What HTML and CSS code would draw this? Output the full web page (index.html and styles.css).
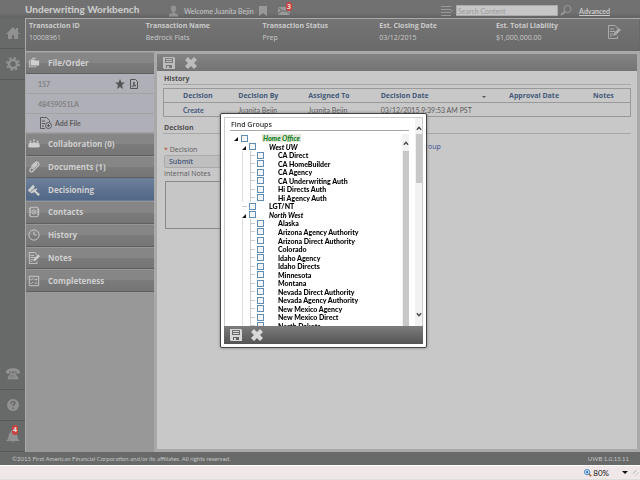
FILE: index.html
```html
<!DOCTYPE html>
<html lang="en">
<head>
  <meta charset="UTF-8">
  <meta name="viewport" content="width=device-width, initial-scale=1.0">
  <title>Underwriting Workbench</title>
  <link rel="stylesheet" href="styles.css">
</head>
<body>
  <svg class="defs" aria-hidden="true">
    <symbol id="save" viewBox="0 0 12 12"><path fill="currentColor" fill-rule="evenodd" d="M0 0h11l1 1v11H1l-1-1zM2 1v5h8V1zM3 8v3h1V9h2v2h3V8z"/><path stroke="currentColor" d="M3 2.5h6M3 4.5h6"/></symbol>
    <symbol id="close" viewBox="0 0 12 12"><path fill="currentColor" d="M3 0l3 3 3-3 3 3-3 3 3 3-3 3-3-3-3 3-3-3 3-3-3-3z"/></symbol>
    <symbol id="note" viewBox="0 0 14 14"><path fill="none" stroke="currentColor" d="M10.500 4V3L8 .5H1.500v13h9V11M3 4h4M3 6.500h5M3 9h3M3 11h2"/><path fill="currentColor" d="M12 3l2 2-5 5-3 1 1-3z"/></symbol>
  </svg>

  <div class="app">
    <header class="topbar">
      <h1>Underwriting Workbench</h1>
      <div class="user">
        <svg class="user-icon" viewBox="0 0 10 12"><path fill="currentColor" d="M5 0c2 0 3 1 3 3S7 7 6 7v1l4 2v2H0v-2l4-2V7C3 7 2 5 2 3s1-3 3-3z"/></svg>
        <span class="welcome">Welcome Juanita Bejin</span>
        <svg class="bookmark" viewBox="0 0 8 10"><path fill="currentColor" d="M0 0h8v10L4 7l-4 3z"/></svg>
        <span class="mail">
          <svg viewBox="0 0 12 8"><path fill="currentColor" d="M0 0h12L6 4zM0 1l3 2-3 4zM12 1v6L9 3zM4 4l2 1 2-1 4 4H0z"/></svg>
          <b class="badge">3</b>
        </span>
      </div>
      <form class="search">
        <svg class="lines" viewBox="0 0 12 10"><path stroke="currentColor" d="M0 .5h10M0 3.500h10M0 6.500h10M0 9.500h10"/><path fill="currentColor" d="M10 4h2l-1 2z"/></svg>
        <input type="text" placeholder="Search Content" aria-label="Search Content">
        <svg class="glass" viewBox="0 0 12 11"><g fill="none" stroke="currentColor"><circle cx="7.500" cy="4" r="3.500"/><path stroke-width="2" d="M5 6.500L1 10"/></g></svg>
        <a href="#">Advanced</a>
      </form>
    </header>

    <div class="main">
      <nav class="rail">
        <a href="#" aria-label="Home"><svg viewBox="0 0 14 14"><path fill="currentColor" d="M7 1l3 3V2h2v4l2 2h-2v5H8V9H6v4H2V8H0z"/></svg></a>
        <a href="#" aria-label="Settings"><svg viewBox="0 0 14 14"><g fill="none" stroke="currentColor"><circle cx="7" cy="7" r="4" stroke-width="2.500"/><circle cx="7" cy="7" r="6" stroke-width="2" stroke-dasharray="2.400 2.310"/></g></svg></a>
        <a href="#" class="phone" aria-label="Phone"><svg viewBox="0 0 16 14"><path fill="currentColor" d="M0 5c0-6 16-6 16 0v1l-4 1V4H4v3L0 6zM5 5h2v1h2V5h2v2l3 4v2H2v-2l3-4z"/><path stroke="#676767" d="M6 8.500h4M5 10.500h6" stroke-dasharray="1 1"/></svg></a>
        <a href="#" aria-label="Help"><svg viewBox="0 0 14 14"><circle cx="7" cy="7" r="6" fill="currentColor"/><path fill="none" stroke="#676767" stroke-width="1.500" d="M5 6c0-3 4-3 4-1 0 1-2 1.500-2 3M7 9.500V11"/></svg></a>
        <a href="#" aria-label="Alerts"><svg viewBox="0 0 14 14"><path fill="currentColor" d="M6 1h2l3 4 1 5 2 2H8l-1 2-1-2H0l2-2 1-5z"/></svg><b class="badge">4</b></a>
      </nav>

      <div class="workspace">
        <section class="summary">
          <dl>
            <div><dt>Transaction ID</dt><dd>10008961</dd></div>
            <div><dt>Transaction Name</dt><dd>Bedrock Flats</dd></div>
            <div><dt>Transaction Status</dt><dd>Prep</dd></div>
            <div><dt>Est. Closing Date</dt><dd>03/12/2015</dd></div>
            <div><dt>Est. Total Liability</dt><dd>$1,000,000.00</dd></div>
          </dl>
          <svg class="note-icon"><use href="#note"/></svg>
        </section>

        <div class="columns">
          <aside class="sidebar">
            <a class="menu-item file-order" href="#"><svg viewBox="0 0 14 14"><path fill="currentColor" d="M1 4h1v7h8v1H1zM3 3h4l1 1h5v6H3zM5 1h4v1H5z"/></svg>File/Order</a>
            <div class="files">
              <div class="file">157
                <svg class="star" viewBox="0 0 10 10"><path fill="currentColor" d="M5 0l1.500 3.500H10L7 6l1 4-3-2-3 2 1-4-3-2.500h3.500z"/></svg>
                <svg class="pdf" viewBox="0 0 8 10"><path fill="none" stroke="currentColor" d="M.5.5h5l2 2v7h-7zM4 3c0 3-1 4-2 5 1-1 3-2 4-1-1 0-2-2-2-4"/></svg>
              </div>
              <div class="file">48459051LA</div>
              <a class="file add" href="#"><svg viewBox="0 0 12 12"><g fill="none" stroke="currentColor"><path d="M5 11.500H.5V.5h6l3 3V5M2 4h3M2 6.500h3M2 9h2"/><circle cx="8.500" cy="8.500" r="3"/><path d="M8.500 7v3M7 8.500h3"/></g></svg>Add File</a>
            </div>
            <nav class="menu">
              <a class="menu-item" href="#"><svg viewBox="0 0 14 14"><path fill="currentColor" d="M1 6l2-1 2 1 2-2 2 2 2-1 2 1 1 4-2 1H2l-2-1z"/><g fill="currentColor"><circle cx="3" cy="4" r="1"/><circle cx="7" cy="2.500" r="1"/><circle cx="11" cy="4" r="1"/></g></svg>Collaboration (0)</a>
              <a class="menu-item" href="#"><svg viewBox="0 0 14 14"><path fill="none" stroke="currentColor" stroke-width="1.300" d="M5 9.500l5-5c1-1 0-2-1-1L3 9c-2 2 0 5 2 3.500l7-7c2-2 0-5-3-4L4 6"/></svg>Documents (1)</a>
              <a class="menu-item active" href="#"><svg viewBox="0 0 14 14"><path fill="currentColor" d="M0 7l6-6 2 2-1 1 2 2 1-1 1 1-2 2 5 4-2 2-5-5-1 2-1-1-1 1-2-2-1 0z"/><path stroke="#5d7391" d="M3 9l6-5"/></svg>Decisioning</a>
              <a class="menu-item" href="#"><svg viewBox="0 0 14 14"><path fill="none" stroke="currentColor" d="M2.500 1.500h9v11h-9zM12.500 3v8M1 3h2M1 5.500h2M1 8h2M1 10.500h2"/><circle cx="7" cy="7" r="2.500" fill="none" stroke="currentColor"/><circle cx="7" cy="7" r="1" fill="currentColor"/></svg>Contacts</a>
              <a class="menu-item" href="#"><svg viewBox="0 0 14 14"><g fill="none" stroke="currentColor"><circle cx="7" cy="7" r="6"/><path d="M7 3v4h3"/></g></svg>History</a>
              <a class="menu-item" href="#"><svg><use href="#note"/></svg>Notes</a>
              <a class="menu-item" href="#"><svg viewBox="0 0 14 14"><path fill="none" stroke="currentColor" d="M1.500 1.500h11v11h-11zM3 5l1 1 2-2M7.500 5.500H11M3 9l1 1 2-2M7.500 9.500H11"/></svg>Completeness</a>
            </nav>
          </aside>

          <main class="content">
            <div class="toolbar">
              <button type="button" aria-label="Save"><svg><use href="#save"/></svg></button>
              <button type="button" aria-label="Close"><svg><use href="#close"/></svg></button>
            </div>
            <div class="panel">
              <h2>History</h2>
              <table>
                <thead>
                  <tr><th>Decision</th><th>Decision By</th><th>Assigned To</th><th>Decision Date <span class="sort"></span></th><th>Approval Date</th><th>Notes</th></tr>
                </thead>
                <tbody>
                  <tr><td><b>Create</b></td><td>Juanita Bejin</td><td>Juanita Bejin</td><td>03/12/2015 9:39:53 AM PST</td><td></td><td></td></tr>
                </tbody>
              </table>
              <h2 class="second">Decision</h2>
              <form class="decision">
                <div class="field">
                  <label for="decision"><i>*</i> Decision</label>
                  <select id="decision"><option>Submit</option></select>
                  <label for="notes">Internal Notes</label>
                  <textarea id="notes"></textarea>
                </div>
                <a class="group-link" href="#">Group</a>
              </form>
            </div>
          </main>
        </div>
      </div>
    </div>

    <footer class="footer">
      <span>©2015 First American Financial Corporation and/or its affiliates. All rights reserved.</span>
      <span>UWB 1.0.15.11</span>
    </footer>
    <div class="statusbar">
      <svg class="zoom-icon" viewBox="0 0 9 9"><path stroke="#b5713a" stroke-width="2" d="M5 5l3 3"/><circle cx="3.500" cy="3.500" r="3" fill="#d8ecfa" stroke="#3d7fc4"/><path stroke="#1c5fae" d="M3.500 2v3M2 3.500h3"/></svg>
      <span>80%</span>
      <span class="caret"></span>
      <span class="grip"></span>
    </div>
  </div>

  <div class="overlay">
    <div class="dialog" role="dialog" aria-labelledby="dialog-title">
      <div class="dialog-main">
        <div class="dialog-body">
          <h2 id="dialog-title">Find Groups</h2>
          <div class="tree-box">
            <ul class="tree">
              <li class="l1 open"><label><input type="checkbox"><em class="selected">Home Office</em></label></li>
              <li class="l2 open"><label><input type="checkbox"><em>West UW</em></label></li>
              <li class="l3"><label><input type="checkbox">CA Direct</label></li>
              <li class="l3"><label><input type="checkbox">CA HomeBuilder</label></li>
              <li class="l3"><label><input type="checkbox">CA Agency</label></li>
              <li class="l3"><label><input type="checkbox">CA Underwriting Auth</label></li>
              <li class="l3"><label><input type="checkbox">Hi Directs Auth</label></li>
              <li class="l3"><label><input type="checkbox">Hi Agency Auth</label></li>
              <li class="l2"><label><input type="checkbox">LGT/NT</label></li>
              <li class="l2 open"><label><input type="checkbox"><em>North West</em></label></li>
              <li class="l3"><label><input type="checkbox">Alaska</label></li>
              <li class="l3"><label><input type="checkbox">Arizona Agency Authority</label></li>
              <li class="l3"><label><input type="checkbox">Arizona Direct Authority</label></li>
              <li class="l3"><label><input type="checkbox">Colorado</label></li>
              <li class="l3"><label><input type="checkbox">Idaho Agency</label></li>
              <li class="l3"><label><input type="checkbox">Idaho Directs</label></li>
              <li class="l3"><label><input type="checkbox">Minnesota</label></li>
              <li class="l3"><label><input type="checkbox">Montana</label></li>
              <li class="l3"><label><input type="checkbox">Nevada Direct Authority</label></li>
              <li class="l3"><label><input type="checkbox">Nevada Agency Authority</label></li>
              <li class="l3"><label><input type="checkbox">New Mexico Agency</label></li>
              <li class="l3"><label><input type="checkbox">New Mexico Direct</label></li>
              <li class="l3"><label><input type="checkbox">North Dakota</label></li>
            </ul>
            <div class="scroll inner">
              <svg viewBox="0 0 7 5"><path fill="none" stroke="#444" stroke-width="1.500" d="M1 4l2.500-3L6 4"/></svg>
              <div class="thumb"></div>
            </div>
          </div>
        </div>
        <div class="scroll outer">
          <svg viewBox="0 0 7 5"><path fill="none" stroke="#444" stroke-width="1.500" d="M1 4l2.500-3L6 4"/></svg>
          <div class="thumb"></div>
          <svg class="down" viewBox="0 0 7 5"><path fill="none" stroke="#444" stroke-width="1.500" d="M1 1l2.500 3L6 1"/></svg>
        </div>
      </div>
      <div class="dialog-footer">
        <button type="button" aria-label="Save"><svg><use href="#save"/></svg></button>
        <button type="button" aria-label="Close"><svg><use href="#close"/></svg></button>
      </div>
    </div>
  </div>
</body>
</html>
```
FILE: styles.css
```css
* {
  box-sizing: border-box;
}
body {
  margin: 0;
  font-family: "Open Sans", "Noto Sans", sans-serif;
  font-size: 7px;
  line-height: 10px;
  color: #5c5c5c;
}
h1, h2, dl, dd, ul {
  margin: 0;
  padding: 0;
}
a {
  color: inherit;
  text-decoration: none;
}
button {
  display: flex;
  border: 0;
  padding: 0;
  background: none;
  color: inherit;
}
svg {
  flex: none;
  display: block;
}
.defs {
  position: absolute;
  width: 0;
  height: 0;
}
.app {
  display: flex;
  flex-direction: column;
  height: 100vh;
  background: #686a6a;
}

/* narrower face for the compact texts */
h1, .welcome, .search, td, .file, .footer, .statusbar, .tree {
  font-family: Lato, "Open Sans", sans-serif;
}

/* top bar */
.topbar {
  display: flex;
  align-items: center;
  height: 18px;
  padding: 0 30px 0 25px;
  background: linear-gradient(#717171 70%, #626262);
  color: #c8c8c8;
}
h1 {
  flex: none;
  width: 144px;
  font-size: 10px;
  font-weight: 900;
  line-height: 16px;
}
.user {
  display: flex;
  align-items: center;
  padding-top: 3px;
}
.user-icon {
  width: 9px;
  height: 12px;
  margin-right: 6px;
  color: #929292;
}
.welcome {
  width: 61px;
  white-space: nowrap;
}
.bookmark {
  width: 8px;
  height: 10px;
  margin-left: 14px;
  color: #999;
}
.mail {
  position: relative;
  margin-left: 11px;
  color: #999;
}
.mail svg {
  width: 12px;
  height: 8px;
}
.badge {
  position: absolute;
  top: -5px;
  right: -2px;
  width: 6px;
  height: 9px;
  border-radius: 3px;
  background: #c8423f;
  color: #e8dcdc;
  font-size: 7px;
  line-height: 9px;
  text-align: center;
}
.search {
  display: flex;
  align-items: center;
  margin-left: auto;
  padding-top: 3px;
}
.lines {
  width: 12px;
  height: 10px;
  margin-right: 3px;
  color: #999;
}
.search input {
  width: 102px;
  height: 11px;
  padding: 0 1px;
  border: 1px solid #aaa;
  background: #c6c6c6;
  font: inherit;
}
.search input::placeholder {
  color: #999;
}
.glass {
  width: 12px;
  height: 11px;
  margin: 0 7px 0 2px;
  color: #999;
}
.search a {
  font-weight: 700;
  text-decoration: underline;
}

/* left rail */
.main {
  flex: 1;
  display: flex;
  min-height: 0;
}
.rail {
  flex: none;
  display: flex;
  flex-direction: column;
  width: 25px;
  color: #919191;
}
.rail a {
  position: relative;
  display: flex;
  align-items: center;
  justify-content: center;
  height: 31px;
  border-bottom: 1px solid #585a5a;
}
.rail svg {
  width: 14px;
  height: 14px;
}
.rail .phone {
  margin-top: auto;
}
.rail .badge {
  top: 4px;
  right: 7px;
  height: 10px;
}

/* transaction summary */
.workspace {
  flex: 1;
  display: flex;
  flex-direction: column;
  min-width: 0;
  border-left: 1px solid #aaa;
  border-top: 1px solid #aaa;
}
.summary {
  display: flex;
  height: 32px;
  margin-right: 1px;
  padding: 1px 18px 0 3px;
  background: linear-gradient(#747474, #6a6a6a);
  color: #cacaca;
}
.summary dl {
  flex: 1;
  display: grid;
  grid-template-columns: repeat(4, 20.2%) 1fr;
}
.summary dt {
  font-weight: 700;
  line-height: 12px;
}
.summary dd {
  line-height: 11px;
}
.note-icon {
  width: 14px;
  height: 14px;
  margin: 5px 0 0;
  color: #aaa;
}
.columns {
  flex: 1;
  display: flex;
  min-height: 0;
  background: #a9a9a9;
}

/* sidebar */
.sidebar {
  flex: none;
  width: 128px;
  margin-top: 1px;
  background: #989898;
}
.menu-item {
  display: flex;
  align-items: center;
  gap: 8px;
  padding-left: 2px;
  border-top: 1px solid #959595;
  border-bottom: 1px solid #5f5f5f;
  background: linear-gradient(#868686 50%, #7b7b7b 50%, #757575);
  color: #cfcfcf;
  font-size: 8px;
  font-weight: 700;
}
.menu-item svg {
  width: 12px;
  height: 12px;
}
.menu-item.active {
  border-color: #687b95;
  background: linear-gradient(#6d7f99, #506787);
}
.file-order {
  height: 22px;
}
.files {
  display: grid;
  grid-template-rows: 20px 20px 19px;
  background: #afafb7;
}
.file {
  display: flex;
  align-items: center;
  padding: 0 16px 0 12px;
  border-bottom: 1px solid #a2a2a2;
  color: #808080;
  font-weight: 700;
}
.file .star {
  width: 10px;
  height: 10px;
  margin-left: auto;
  color: #555;
}
.file .pdf {
  width: 8px;
  height: 10px;
  margin-left: 5px;
  color: #555;
}
.file.add {
  gap: 3px;
  padding-left: 14px;
  color: #5c5c5c;
}
.file.add svg {
  width: 12px;
  height: 12px;
}
.menu {
  display: grid;
  grid-auto-rows: 1fr;
  height: 159px;
}

/* content */
.content {
  flex: 1;
  display: flex;
  flex-direction: column;
  min-width: 0;
  margin: 3px;
  background: #c8c8c8;
}
.toolbar {
  display: flex;
  align-items: center;
  gap: 10px;
  height: 17px;
  padding-left: 6px;
  background: linear-gradient(#838383, #747474);
  color: #bcbcbc;
}
.toolbar svg,
.dialog-footer svg {
  width: 12px;
  height: 12px;
}
.panel {
  padding: 2px 6px;
}
h2 {
  padding-left: 1px;
  border-bottom: 1px solid #a8a8a8;
  color: #505050;
  font-size: 7px;
  font-weight: 700;
  line-height: 11px;
}
h2.second {
  margin-top: 5px;
}
table {
  width: 100%;
  margin-top: 3px;
  table-layout: fixed;
  border-collapse: collapse;
  border: 1px solid #999;
}
tr {
  height: 14px;
  border-bottom: 1px solid #999;
}
th, td {
  padding: 0;
  text-align: left;
  line-height: 12px;
  white-space: nowrap;
}
th {
  color: #44597a;
  font-weight: 700;
}
td b {
  color: #44597a;
  font-weight: 700;
}
th:first-child, td:first-child {
  width: 16%;
  padding-left: 19px;
}
th:nth-child(2) {
  width: 15%;
}
th:nth-child(3) {
  width: 15.5%;
}
th:nth-child(4) {
  width: 27.5%;
}
th:nth-child(5) {
  width: 18%;
}
.sort {
  float: right;
  margin: 6px 23px 0 0;
  border: 2px solid transparent;
  border-top-color: #555;
  border-bottom: 0;
}
.decision {
  display: flex;
  align-items: flex-start;
  padding-top: 11px;
}
.field {
  display: flex;
  flex-direction: column;
  flex: none;
  width: 250px;
  padding-left: 1px;
}
.field i {
  color: #b04a2a;
  font-style: normal;
}
.field select {
  width: 200px;
  height: 13px;
  margin-bottom: 1px;
  padding: 0 4px;
  border: 1px solid #aaa;
  border-radius: 2px;
  appearance: none;
  background: #bfbfbf;
  color: #44597a;
  font: inherit;
  font-weight: 600;
}
.field textarea {
  width: 200px;
  height: 48px;
  margin: 2px 0 0 1px;
  border: 1px solid #888;
  background: #c6c6c6;
  resize: none;
}
.group-link {
  margin-left: 7px;
  margin-top: -3px;
  color: #3e4f94;
}

/* footer and browser bar */
.footer {
  display: flex;
  justify-content: space-between;
  height: 13px;
  padding: 0 11px 0 12px;
  color: #c4c4c4;
  font-size: 6px;
  line-height: 14px;
}
.statusbar {
  display: flex;
  align-items: center;
  justify-content: flex-end;
  height: 15px;
  padding-right: 1px;
  border-top: 1px solid #fff;
  border-bottom: 1px solid #ddd;
  background: #f0e8e8;
  color: #111;
  font-size: 8px;
}
.zoom-icon {
  width: 8px;
  height: 8px;
  margin-right: 1px;
}
.caret {
  margin: 0 5px 0 13px;
  border: 3px solid transparent;
  border-top-color: #111;
  border-bottom: 0;
}
.grip {
  width: 6px;
  height: 6px;
  background: repeating-linear-gradient(135deg, transparent 0 2px, #ccc 2px 3px);
}

/* find groups dialog */
.overlay {
  position: fixed;
  inset: 0;
  display: flex;
  align-items: flex-start;
  justify-content: center;
  padding: 113px 0 0 7px;
}
.dialog {
  width: 207px;
  padding: 3px;
  border: 1px solid #444;
  border-radius: 2px;
  background: #fff;
  box-shadow: 0 0 3px #777;
  color: #111;
}
.dialog-main {
  display: flex;
  height: 209px;
  border: 1px solid #ccc;
  border-bottom: 0;
  overflow: hidden;
}
.dialog-body {
  flex: 1;
  padding: 1px 6px 0 5px;
}
.dialog h2 {
  color: #333;
  font-weight: 600;
}
.tree-box {
  display: flex;
  height: 195px;
  margin-top: 3px;
  overflow: hidden;
}
.tree {
  flex: 1;
  display: grid;
  grid-auto-rows: 1fr;
  height: 196px;
  list-style: none;
  font-weight: 900;
  color: #000;
}
.tree li {
  position: relative;
  display: flex;
  align-items: center;
  min-height: 0;
  white-space: nowrap;
}
.tree label {
  display: flex;
  align-items: center;
  height: 8px;
}
.tree input {
  appearance: none;
  width: 7px;
  height: 7px;
  margin: 0 14px 0 0;
  border: 1px solid #5f8db5;
  background: #f4f6f8;
}
.l1 {
  padding-left: 11px;
}
.l2 {
  padding-left: 19px;
  background: linear-gradient(#ccc, #ccc) 12px 50% / 5px 1px no-repeat;
}
.tree .l2 input {
  margin-right: 13px;
}
.l3 {
  padding-left: 27px;
  background:
    linear-gradient(#ccc, #ccc) 20px 50% / 5px 1px no-repeat,
    linear-gradient(#ddd, #ddd) 12px 0 / 1px 100% no-repeat,
    linear-gradient(#ccc, #ccc) 20px 0 / 1px 100% no-repeat;
}
.open {
  background: none;
}
.open::before {
  content: "";
  position: absolute;
  left: 4px;
  top: 3px;
  border: 2px solid transparent;
  border-right-color: #111;
  border-bottom-color: #111;
}
.l2.open::before {
  left: 12px;
}
.selected {
  padding: 0 1px;
  line-height: 8px;
  background: #e6e6dc;
  color: #11821c;
}
.scroll {
  flex: none;
  display: flex;
  flex-direction: column;
  align-items: center;
  width: 7px;
  background: #f2f2f2;
}
.scroll svg {
  width: 6px;
  height: 5px;
}
.scroll .thumb {
  width: 6px;
  background: #c8c8c8;
}
.inner {
  padding-top: 7px;
}
.inner .thumb {
  flex: 1;
  margin-top: 5px;
}
.outer {
  padding: 8px 0 9px;
}
.outer .thumb {
  height: 49px;
  margin-top: 3px;
}
.outer .down {
  margin-top: auto;
}
.dialog-footer {
  display: flex;
  align-items: center;
  gap: 9px;
  height: 18px;
  padding-left: 6px;
  background: linear-gradient(#7c7c7c, #545454);
  color: #d8d8d8;
}
```
